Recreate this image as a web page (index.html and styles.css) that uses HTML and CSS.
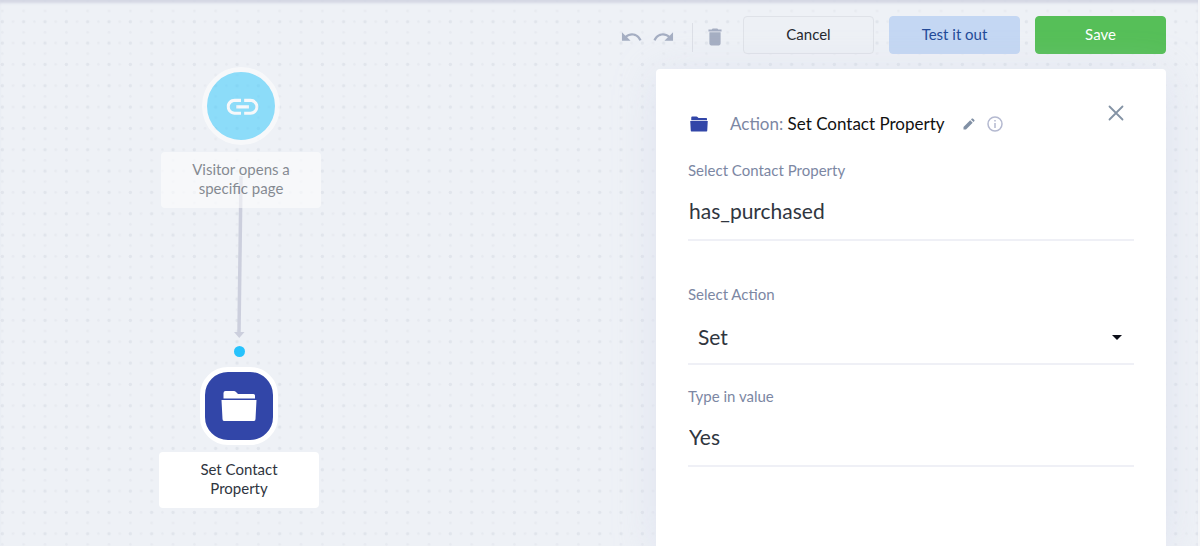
FILE: index.html
```html
<!doctype html>
<html lang="en">
  <head>
    <meta charset="UTF-8" />
    <meta name="viewport" content="width=device-width, initial-scale=1.0" />
    <title>Set Contact Property</title>
    <link rel="stylesheet" href="styles.css">
  </head>

  <body>
    <div id="app">
      <div class="canvas">
        <div class="node node-trigger">
          <div class="node-icon">
            <svg width="38" height="38" viewBox="-1 -.5 24 24" fill="#fff">
              <path d="M3.900 12c0-1.710 1.390-3.100 3.100-3.100h4V7H7c-2.760 0-5 2.240-5 5s2.240 5 5 5h4v-1.900H7c-1.710 0-3.100-1.390-3.100-3.100zM8 13h8v-2H8v2zm9-6h-4v1.900h4c1.710 0 3.100 1.390 3.100 3.100s-1.390 3.100-3.100 3.100h-4V17h4c2.760 0 5-2.240 5-5s-2.240-5-5-5z" />
            </svg>
          </div>
          <div class="node-label">Visitor opens a specific page</div>
        </div>

        <svg class="connector" width="12" height="162" viewBox="0 0 12 162">
          <path d="M7 0L5 157" stroke="#cccfdd" stroke-width="3.500" fill="none" />
          <path d="M0 156h10.500l-5.250 6z" fill="#cccfdd" />
        </svg>
        <div class="port"></div>

        <div class="node node-action">
          <div class="node-icon">
            <svg width="36" height="32" viewBox="0 0 36 32" fill="#fff">
              <path d="M2.500 8V3Q2.500 1 4.500 1H13Q14 1 15 2L17 4H32.500Q34 4 34 5.500V8.500H2.500z" />
              <path d="M.5 10H35.500L34.500 29Q34.500 31 33 31H3Q1.500 31 1.500 29z" />
            </svg>
          </div>
          <div class="node-label">Set Contact Property</div>
        </div>
      </div>

      <div class="sidebar">
        <div class="toolbar">
          <button class="tool" type="button" aria-label="Undo">
            <svg width="22" height="14" viewBox="1 5 23 14" fill="#a5aec2">
              <path d="M12.500 8c-2.650 0-5.050.99-6.900 2.600L2 7v9h9l-3.620-3.620c1.390-1.160 3.160-1.880 5.120-1.880 3.540 0 6.550 2.310 7.600 5.500l2.370-.78C21.080 11.030 17.150 8 12.500 8z" />
            </svg>
          </button>
          <button class="tool" type="button" aria-label="Redo">
            <svg width="22" height="14" viewBox="0 5 23 14" fill="#a5aec2">
              <path d="M18.400 10.600C16.550 8.990 14.150 8 11.500 8c-4.650 0-8.580 3.030-9.960 7.220L3.900 16c1.050-3.190 4.050-5.500 7.600-5.500 1.950 0 3.730.72 5.120 1.880L13 16h9V7l-3.600 3.600z" />
            </svg>
          </button>
          <span class="divider"></span>
          <button class="tool tool-delete" type="button" aria-label="Delete">
            <svg width="14" height="18" viewBox="4.500 2.500 15 19" fill="#a5aec2">
              <path d="M6 19c0 1.100.9 2 2 2h8c1.100 0 2-.9 2-2V7H6v12zM19 4h-3.500l-1-1h-5l-1 1H5v2h14V4z" />
            </svg>
          </button>
          <button class="button" type="button">Cancel</button>
          <button class="button button-test" type="button">Test it out</button>
          <button class="button button-save" type="button">Save</button>
        </div>

        <form class="panel">
          <div class="panel-header">
            <div class="panel-title">
              <svg class="folder" width="18" height="16" viewBox="0 0 36 32" fill="#3246a8">
                <path d="M2.500 8V3Q2.500 1 4.500 1H13Q14 1 15 2L17 4H32.500Q34 4 34 5.500V8.500H2.500z" />
                <path d="M.5 10H35.500L34.500 29Q34.500 31 33 31H3Q1.500 31 1.500 29z" />
              </svg>
              <h1 class="title"><span class="title-type">Action:</span> Set Contact Property</h1>
              <button class="icon-button" type="button" aria-label="Rename">
                <svg width="12" height="12" viewBox="0 0 12 12" fill="#8190a5">
                  <path d="M.5 9L7.200 2.300l2.500 2.500L3 11.500H.5zM8 1.500l.9-.9q.5-.4 1 0l1.500 1.500q.4.5 0 1l-.9.900z" />
                </svg>
              </button>
              <button class="icon-button" type="button" aria-label="Info">
                <svg width="16" height="16" viewBox="0 0 16 16" fill="none" stroke="#b4b9d0">
                  <circle cx="8" cy="8" r="7" stroke-width="1.500" />
                  <path d="M8 7v5M8 4v1.500" stroke-width="1.500" />
                </svg>
              </button>
            </div>
            <button class="icon-button" type="button" aria-label="Close">
              <svg width="16" height="16" viewBox="0 0 16 16" fill="none" stroke="#8493a5" stroke-width="1.800" stroke-linecap="round">
                <path d="M1.500 1.500l13 13M14.500 1.500l-13 13" />
              </svg>
            </button>
          </div>

          <div class="field field-property">
            <label for="property">Select Contact Property</label>
            <input id="property" type="text" value="has_purchased">
          </div>
          <div class="field">
            <label for="action">Select Action</label>
            <select id="action">
              <option>Set</option>
            </select>
          </div>
          <div class="field">
            <label for="value">Type in value</label>
            <input id="value" type="text" value="Yes">
          </div>
        </form>
      </div>
    </div>
  </body>
</html>
```
FILE: styles.css
```css
html,
body {
  height: 100%;
  margin: 0;
}

body {
  font-family: Lato, "Liberation Sans", sans-serif;
  font-size: 15px;
  overflow: hidden;
}

#app {
  position: relative;
  height: 100%;
  box-sizing: border-box;
  background-color: #eef1f6;
  background-image: url("data:image/svg+xml,%3Csvg xmlns='http://www.w3.org/2000/svg' viewBox='0 0 192 192'%3E%3Cdefs%3E%3Cpattern id='d' width='64' height='64' patternUnits='userSpaceOnUse'%3E%3Ccircle cx='7' cy='7' r='5' fill='%23e0e4eb'/%3E%3Ccircle cx='39' cy='7' r='4' fill='%23e7eaf0'/%3E%3Ccircle cx='7' cy='39' r='4' fill='%23e7eaf0'/%3E%3C/pattern%3E%3C/defs%3E%3Crect width='192' height='192' fill='url(%23d)'/%3E%3C/svg%3E");
  background-size: 64px 64px;
  background-position: 0 -2px;
  border-right: 2px solid #f5f6f8;
  box-shadow: inset 0 4px 3px -1px #d4d7e4;
}

.canvas {
  position: absolute;
  inset: 0;
}

.node {
  position: absolute;
  width: 160px;
  display: flex;
  flex-direction: column;
  align-items: center;
  gap: 7px;
}

.node-trigger {
  left: 161px;
  top: 67px;
  opacity: 0.55;
  z-index: 1;
}

.node-action {
  left: 159px;
  top: 367px;
}

.node-icon {
  width: 68px;
  height: 68px;
  display: flex;
  align-items: center;
  justify-content: center;
  border: 5px solid #fff;
}

.node-trigger .node-icon {
  border-radius: 50%;
  background-color: #3dcbfd;
}

.node-action .node-icon {
  border-radius: 28px;
  background-color: #3246a8;
}

.node-label {
  width: 100%;
  box-sizing: border-box;
  padding: 8px 24px 10px;
  border-radius: 4px;
  background-color: #fff;
  color: #2f3540;
  line-height: 19px;
  text-align: center;
}

.connector {
  position: absolute;
  left: 234px;
  top: 176px;
}

.port {
  position: absolute;
  left: 234px;
  top: 346px;
  width: 11px;
  height: 11px;
  border-radius: 50%;
  background-color: #27c2fc;
}

.sidebar {
  position: relative;
  height: 100%;
  box-sizing: border-box;
  padding: 16px 32px 0 0;
  display: flex;
  flex-direction: column;
  align-items: flex-end;
  gap: 15px;
}

.toolbar {
  display: flex;
  align-items: center;
  gap: 15px;
}

button {
  font: inherit;
  cursor: pointer;
}

.tool,
.icon-button {
  display: flex;
  padding: 0;
  border: none;
  background: none;
}

.tool {
  padding-top: 4px;
}

.tool + .tool {
  margin-left: -6px;
}

.tool-delete {
  margin-right: 6px;
}

.divider {
  width: 1px;
  height: 29px;
  margin: 4px 0 0 3px;
  background-color: #dcdfe6;
}

.button {
  width: 131px;
  height: 38px;
  padding: 0 0 3px;
  border: 1px solid #dfe2e8;
  border-radius: 4px;
  background-color: #edf0f5;
  color: #25282e;
}

.button-test {
  border-color: #c4d7f3;
  background-color: #c4d7f3;
  color: #234a98;
}

.button-save {
  border-color: #56bf58;
  background-color: #56bf58;
  color: #fff;
}

.panel {
  flex: 1;
  width: 510px;
  max-width: 100%;
  box-sizing: border-box;
  padding: 36px 32px 0;
  display: flex;
  flex-direction: column;
  gap: 21px;
  border-radius: 4px 4px 0 0;
  background-color: #fff;
  box-shadow: 0 6px 40px #c8d0e866;
}

.panel-header {
  display: flex;
  align-items: flex-start;
  justify-content: space-between;
  padding-right: 10px;
}

.panel-title {
  display: flex;
  align-items: center;
  padding: 7px 0 3px 2px;
  gap: 16px;
}

.title {
  margin: 0 2px 0 6px;
  font-size: 17px;
  font-weight: 400;
  line-height: 24px;
  color: #111;
}

.title-type {
  color: #7c87a3;
}

.title + .icon-button {
  margin-right: -4px;
}

.field {
  display: flex;
  flex-direction: column;
  gap: 1px;
}

.field-property {
  margin-bottom: 22px;
}

.field label {
  line-height: 20px;
  color: #7c87a3;
}

.field input,
.field select {
  height: 60px;
  box-sizing: border-box;
  padding: 0 1px;
  border: none;
  border-bottom: 2px solid #eff0f6;
  border-radius: 0;
  outline: none;
  background-color: transparent;
  color: #30363f;
  font: inherit;
  font-size: 21px;
}

.field select {
  appearance: none;
  padding: 4px 10px 0;
  background-image: url("data:image/svg+xml,%3Csvg xmlns='http://www.w3.org/2000/svg' viewBox='0 0 10 5'%3E%3Cpath d='M0 0h10L5 5z' fill='%230c0e18'/%3E%3C/svg%3E");
  background-repeat: no-repeat;
  background-size: 10px 5px;
  background-position: right 12px top 30px;
}
```
